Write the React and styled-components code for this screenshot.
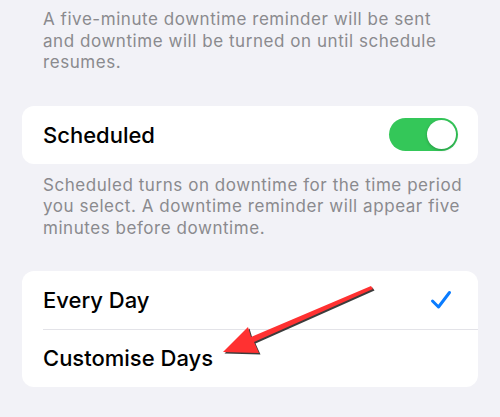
import React from 'react'
import styled, { createGlobalStyle } from 'styled-components'

const GlobalStyle = createGlobalStyle`
  html, body {
    margin: 0;
    padding: 0;
    background: #f2f2f7;
  }
  body {
    font-family: Inter, "Noto Sans", "Liberation Sans", sans-serif;
    -webkit-font-smoothing: antialiased;
  }
`

const Page = styled.div`
  position: relative;
  width: 500px;
  height: 417px;
  overflow: hidden;
  background: #f2f2f7;
  padding: 9px 22px 0;
  box-sizing: border-box;
`

const Note = styled.p`
  margin: ${p => p.$top || 0}px 0 0;
  padding: 0 ${p => p.$right || 20}px 0 21px;
  font-size: 17px;
  line-height: 21.6px;
  letter-spacing: 0.55px;
  color: #8a8a8e;
`

const Card = styled.div`
  margin-top: ${p => p.$top || 0}px;
  background: #fff;
  border-radius: 12px;
  overflow: hidden;
`

const Row = styled.div`
  display: flex;
  align-items: center;
  justify-content: space-between;
  height: 58px;
  padding: 0 20px 0 21px;
  position: relative;
  & + &::before {
    content: '';
    position: absolute;
    top: 0;
    left: 21px;
    right: 0;
    height: 1px;
    background: #e3e3e8;
  }
`

const Label = styled.span`
  font-size: 22px;
  font-weight: 500;
  color: #000;
`

const Toggle = styled.div`
  width: 69px;
  height: 33px;
  border-radius: 17px;
  background: #34c759;
  display: flex;
  align-items: center;
  justify-content: flex-end;
  padding: 0 2px;
  box-sizing: border-box;
`

const Knob = styled.div`
  width: 29px;
  height: 29px;
  border-radius: 50%;
  background: #fff;
  box-shadow: 0 1px 3px rgba(0, 0, 0, 0.25);
`

const CheckMark = styled.svg`
  margin-right: 6px;
`

const Arrow = styled.svg`
  position: absolute;
  left: 0;
  top: 0;
  pointer-events: none;
`

function Check() {
  return (
    <CheckMark width="22" height="20" viewBox="0 0 22 20">
      <path d="M2.5 11 L8.5 17 L19.5 2.5" fill="none" stroke="#0a7cff" strokeWidth="3" strokeLinecap="round" strokeLinejoin="round" />
    </CheckMark>
  )
}

const arrowPath = 'M371 286 L373 289 L254 342 L259 353 L223 352 L248 327 L251 337 Z'

export default function App() {
  return (
    <>
      <GlobalStyle />
      <Page>
        <Note $right={30}>
          A five-minute downtime reminder will be sent and downtime will be turned on until schedule resumes.
        </Note>
        <Card $top={32}>
          <Row>
            <Label>Scheduled</Label>
            <Toggle><Knob /></Toggle>
          </Row>
        </Card>
        <Note $top={11} $right={4}>
          Scheduled turns on downtime for the time period you select. A downtime reminder will appear five minutes before downtime.
        </Note>
        <Card $top={31}>
          <Row>
            <Label>Every Day</Label>
            <Check />
          </Row>
          <Row>
            <Label>Customise Days</Label>
          </Row>
        </Card>
        <Arrow width="500" height="417" viewBox="0 0 500 417">
          <path d={arrowPath} transform="translate(1.5 1.5)" fill="#1a1a1a" opacity="0.85" />
          <path d={arrowPath} fill="#ff3131" />
        </Arrow>
      </Page>
    </>
  )
}
